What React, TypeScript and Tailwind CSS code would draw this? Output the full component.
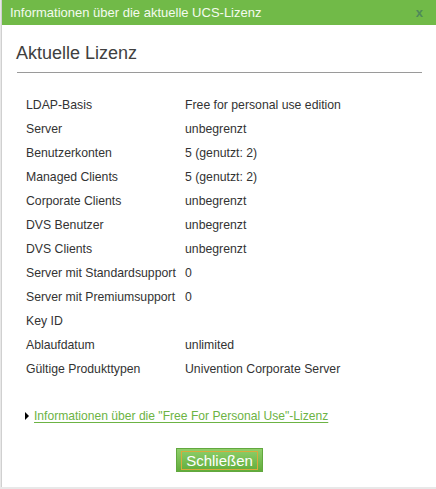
import React from "react";

const rows: [string, string][] = [
  ["LDAP-Basis", "Free for personal use edition"],
  ["Server", "unbegrenzt"],
  ["Benutzerkonten", "5 (genutzt: 2)"],
  ["Managed Clients", "5 (genutzt: 2)"],
  ["Corporate Clients", "unbegrenzt"],
  ["DVS Benutzer", "unbegrenzt"],
  ["DVS Clients", "unbegrenzt"],
  ["Server mit Standardsupport", "0"],
  ["Server mit Premiumsupport", "0"],
  ["Key ID", ""],
  ["Ablaufdatum", "unlimited"],
  ["Gültige Produkttypen", "Univention Corporate Server"],
];

export default function App() {
  return (
    <div
      className="w-[436px] h-[489px] bg-[#e8e8e8] overflow-hidden"
      style={{ fontFamily: '"Liberation Sans", Arial, sans-serif' }}
    >
      <div className="ml-[1px] w-[436px] h-[487px] bg-white border-l border-[#d0d0d0] flex flex-col">
        <div className="h-[25px] bg-[#71ba48] flex items-center justify-between pl-[8px] pr-[10px]">
          <span className="text-[13px] text-[#f4faef] leading-none">
            Informationen über die aktuelle UCS-Lizenz
          </span>
          <span className="text-[13px] font-bold text-[#4f8a5a] leading-none mr-[4px]">x</span>
        </div>
        <div className="px-[14px]">
          <div className="mt-[17px] text-[18px] text-[#404040] leading-[22px]">
            Aktuelle Lizenz
          </div>
          <div className="mt-[8px] h-px bg-[#9a9a9a] w-[405px] ml-[1px]" />
          <div className="mt-[20px] pl-[10px] flex flex-col">
            {rows.map(([k, v]) => (
              <div key={k} className="flex h-[24px] items-center text-[12.25px] text-[#333]">
                <span className="w-[159px]">{k}</span>
                <span>{v}</span>
              </div>
            ))}
          </div>
          <div className="mt-[27px] pl-[9px] flex items-center h-[16px]">
            <span className="w-0 h-0 border-y-[4px] border-y-transparent border-l-[4px] border-l-black mr-[5px]" />
            <span className="text-[12.1px] text-[#6cb344] underline underline-offset-2">
              Informationen über die "Free For Personal Use"-Lizenz
            </span>
          </div>
          <div className="mt-[24px] flex justify-center">
            <div className="h-[24px] w-[87px] border border-[#62a83f] bg-gradient-to-b from-[#8fcf6a] to-[#61ad3b] flex items-center justify-center">
              <span className="px-[4px] border border-[#d9a93c] text-[15px] leading-[17px] text-white">
                Schließen
              </span>
            </div>
          </div>
        </div>
      </div>
    </div>
  );
}
